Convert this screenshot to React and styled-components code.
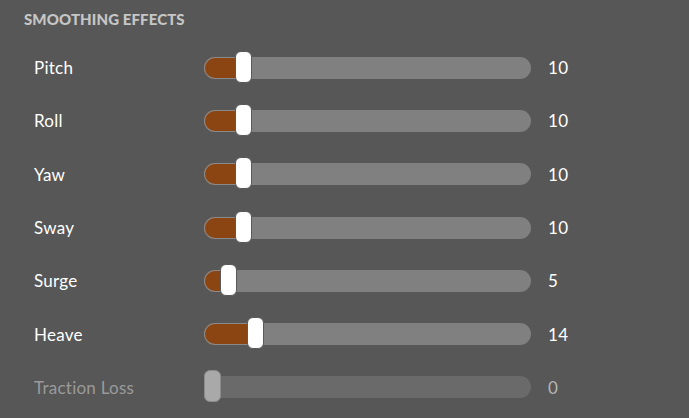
import React from "react";
import styled, { createGlobalStyle } from "styled-components";

const GlobalStyle = createGlobalStyle`
    html, body {
        margin: 0;
        background: #575757;
        font-family: "Lato", "Open Sans", sans-serif;
    }
`;

const Panel = styled.div`
    width: 689px;
    height: 418px;
    background: #575757;
    padding: 10px 0 0 24px;
    box-sizing: border-box;
    overflow: hidden;
`;

const Title = styled.div`
    color: #c6c6c6;
    font-size: 15px;
    font-weight: 900;
    letter-spacing: 0.1px;
    height: 18px;
    line-height: 18px;
`;

const List = styled.div`
    display: flex;
    flex-direction: column;
    padding: 13px 0 0 10px;
`;

const Row = styled.div`
    display: grid;
    grid-template-columns: 153px 327px auto;
    column-gap: 17px;
    align-items: center;
    height: 53.3px;
`;

const Label = styled.div`
    color: ${(p) => (p.disabled ? "#9a9a9a" : "#ffffff")};
    font-size: 17px;
    letter-spacing: 0.25px;
`;

const Value = styled.div`
    color: ${(p) => (p.disabled ? "#b5b5b5" : "#ffffff")};
    font-size: 17px;
    letter-spacing: 0.3px;
`;

const Track = styled.div`
    position: relative;
    height: 22px;
    border-radius: 11px;
    background: ${(p) => (p.disabled ? "#6a6a6a" : "#808080")};
`;

const Fill = styled.div`
    position: absolute;
    left: 0;
    top: 0;
    bottom: 0;
    border-radius: 11px 0 0 11px;
    background: #8b4513;
    box-shadow: inset 0 0 0 1px #8a8a8a;
`;

const Thumb = styled.div`
    position: absolute;
    top: -6px;
    width: 17px;
    height: 32px;
    box-sizing: border-box;
    border-radius: 6px;
    background: ${(p) => (p.disabled ? "#a9a9a9" : "#ffffff")};
    border: 1px solid ${(p) => (p.disabled ? "#8c8c8c" : "#5a5a5a")};
`;

const rows = [
    { name: "Pitch", value: 10 },
    { name: "Roll", value: 10 },
    { name: "Yaw", value: 10 },
    { name: "Sway", value: 10 },
    { name: "Surge", value: 5 },
    { name: "Heave", value: 14 },
    { name: "Traction Loss", value: 0, disabled: true },
];

function Slider({ value, disabled }) {
    const left = (value / 100) * 310;
    return (
        <Track disabled={disabled}>
            {value > 0 && <Fill style={{ width: left + 9 }} />}
            <Thumb disabled={disabled} style={{ left }} />
        </Track>
    );
}

export default function App() {
    return (
        <Panel>
            <GlobalStyle />
            <Title>SMOOTHING EFFECTS</Title>
            <List>
                {rows.map((r) => (
                    <Row key={r.name}>
                        <Label disabled={r.disabled}>{r.name}</Label>
                        <Slider value={r.value} disabled={r.disabled} />
                        <Value disabled={r.disabled}>{r.value}</Value>
                    </Row>
                ))}
            </List>
        </Panel>
    );
}
